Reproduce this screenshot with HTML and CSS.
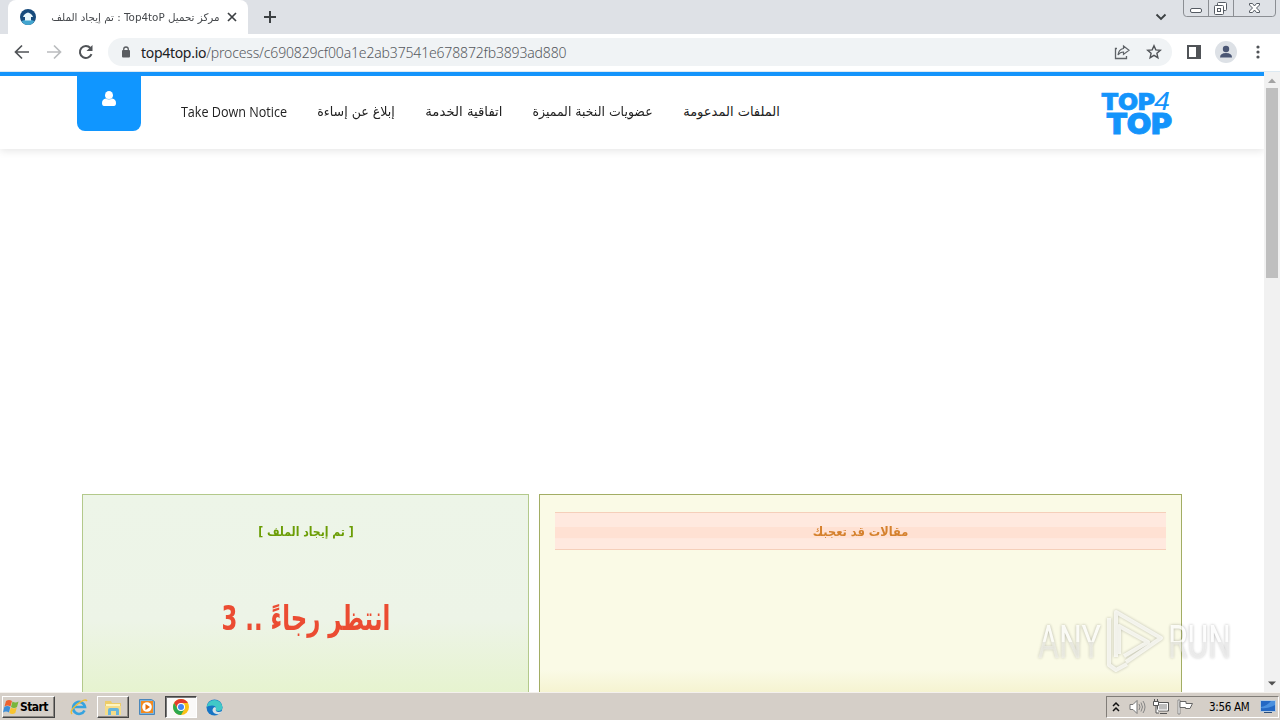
FILE: index.html
```html
<!DOCTYPE html>
<html lang="ar">
<head>
<meta charset="utf-8">
<title>Top4toP</title>
<link rel="stylesheet" href="styles.css">
</head>
<body>
<div class="tabstrip">
  <div class="tab">
    <svg class="favicon" width="16" height="16" viewBox="0 0 16 16"><circle cx="8" cy="8" r="8" fill="#174a7c"/><path d="M1.500 12q6.500-3 13 0A8 8 0 0 1 8 16a8 8 0 0 1-6.500-4" fill="#42a5cf"/><path d="M8 3.500q4 1 5 4.500h-2v3.500H5V8H3q1-3.500 5-4.500z" fill="#e9f7fc"/></svg>
    <span class="tab-title" dir="rtl"><span class="fit">مركز تحميل Top4toP : تم إيجاد الملف</span></span>
    <svg class="tab-close" width="10" height="10" viewBox="0 0 10 10"><path d="m1 1 8 8M9 1 1 9" stroke="#3c4043" stroke-width="1.700"/></svg>
  </div>
  <svg class="newtab" width="12" height="12" viewBox="0 0 12 12"><path d="M6 0v12M0 6h12" stroke="#3c4043" stroke-width="2"/></svg>
  <svg class="chevron" width="12" height="8" viewBox="0 0 12 8"><path d="m1.500 1.500 4.500 4.500 4.500-4.500" fill="none" stroke="#3c4043" stroke-width="1.900"/></svg>
  <svg class="winctl" width="93" height="17" viewBox="0 0 93 17"><path d="M.5 0v13q0 3.500 3 3.500h86q3 0 3-3.500V0M25.500 0v16M50.500 0v16" fill="none" stroke="#8b8e93"/><rect x="7.500" y="8.500" width="11" height="4" rx="1.500" fill="#fff" stroke="#555b63"/><rect x="34.500" y="2.500" width="9" height="8" rx="1" fill="#fff" stroke="#555b63"/><rect x="31.500" y="5.500" width="9" height="9" rx="1" fill="#fff" stroke="#555b63"/><rect x="34.500" y="8.500" width="3" height="3" fill="none" stroke="#555b63"/><path d="M66.500 3.500h3l2 2.500 2-2.500h3v1.500L73.500 8l3 3v1.500h-3l-2-2.500-2 2.500h-3V11l3-3-3-3z" fill="#fff" stroke="#555b63"/></svg>
</div>
<div class="toolbar">
  <svg class="nav-icon" width="16" height="16" viewBox="0 0 16 16"><path d="M15 8H2M8 1.500 1.500 8 8 14.500" fill="none" stroke="#505357" stroke-width="1.700"/></svg>
  <svg class="nav-icon" width="16" height="16" viewBox="0 0 16 16"><path d="M1 8h13M8 1.500 14.500 8 8 14.500" fill="none" stroke="#babcbe" stroke-width="1.700"/></svg>
  <svg class="nav-icon" width="16" height="16" viewBox="0 0 16 16"><path d="M13.500 10.200A6 6 0 1 1 12.400 4" fill="none" stroke="#505357" stroke-width="2"/><path d="M14.500 1v6h-6z" fill="#505357"/></svg>
  <div class="omnibox">
    <svg class="lock" width="8" height="12" viewBox="0 0 8 12"><rect y="4" width="8" height="7.500" rx="1" fill="#5a5d61"/><path d="M1.700 5V3.300a2.300 2.300 0 0 1 4.600 0V5" fill="none" stroke="#5a5d61" stroke-width="1.300"/></svg>
    <span class="url"><b>top4top.io</b>/process/c690829cf00a1e2ab37541e678872fb3893ad880</span>
    <svg class="share" width="16" height="16" viewBox="0 0 16 16"><path d="M3 4.500H1.500v10h11V12" fill="none" stroke="#5f6368" stroke-width="1.300"/><path d="M9.500 2 15 6.200l-5.500 4.200V8Q6 8 4 11q.5-5.500 5.500-6.500z" fill="none" stroke="#5f6368" stroke-width="1.200"/></svg>
    <svg width="16" height="16" viewBox="0 0 16 16"><path d="m8 1.800 1.800 4.100 4.500.4-3.400 3 1 4.400L8 11.400l-3.900 2.300 1-4.400-3.400-3 4.500-.4z" fill="none" stroke="#505357" stroke-width="1.400"/></svg>
  </div>
  <svg class="panel" width="14" height="14" viewBox="0 0 14 14"><path d="M1 1h12v12H1z" fill="#fff" stroke="#505357" stroke-width="2"/><path d="M9 1h4v12H9z" fill="#505357"/></svg>
  <svg class="avatar" width="22" height="22" viewBox="0 0 22 22"><circle cx="11" cy="11" r="11" fill="#dde1e6"/><circle cx="11" cy="8" r="3.200" fill="#4a5674"/><path d="M5 16.500q0-4.500 6-4.500t6 4.500z" fill="#4a5674"/></svg>
  <svg class="more" width="4" height="14" viewBox="0 0 4 14"><g fill="#505357"><circle cx="2" cy="2" r="1.600"/><circle cx="2" cy="7" r="1.600"/><circle cx="2" cy="12" r="1.600"/></g></svg>
</div>
<div class="viewport">
  <div class="page">
    <header class="header">
      <div class="user"><svg width="16" height="16" viewBox="0 0 16 16"><path d="M1 12q0-4 4-4.500 3 1.500 6 0 4 .5 4 4.500 0 3-2 3H3q-2 0-2-3" fill="#fff"/><ellipse cx="8" cy="4.300" rx="4" ry="4.300" fill="#fff"/><path d="M4.500 7.300 8 8.500l3.500-1.200" fill="none" stroke="#8ac7fb" stroke-width=".7"/></svg></div>
      <nav class="menu">
        <a class="m1"><span class="fit">Take Down Notice</span></a>
        <a class="m2" dir="rtl"><span class="fit">إبلاغ عن إساءة</span></a>
        <a class="m3" dir="rtl"><span class="fit">اتفاقية الخدمة</span></a>
        <a class="m4" dir="rtl"><span class="fit">عضويات النخبة المميزة</span></a>
        <a class="m5" dir="rtl"><span class="fit">الملفات المدعومة</span></a>
      </nav>
      <svg class="logo" width="72" height="46" viewBox="0 0 72 46"><g fill="#1494fb" stroke="#1494fb" font-family="Inter, sans-serif" font-weight="900"><text x="1" y="19" font-size="23.500" textLength="54" lengthAdjust="spacingAndGlyphs" stroke-width=".6">TOP</text><text x="6" y="42.500" font-size="29" textLength="66" lengthAdjust="spacingAndGlyphs" stroke-width=".9">TOP</text></g><text x="54" y="18.500" font-size="25" font-style="italic" fill="#1494fb" font-family="Liberation Sans, sans-serif" textLength="16" lengthAdjust="spacingAndGlyphs">4</text></svg>
    </header>
    <main class="content">
      <section class="file-box">
        <h2 dir="rtl"><span class="fit">[ تم إيجاد الملف ]</span></h2>
        <p dir="rtl"><span class="fit">انتظر رجاءً .. 3</span></p>
      </section>
      <section class="articles">
        <h2 dir="rtl"><span class="fit">مقالات قد تعجبك</span></h2>
      </section>
    </main>
  </div>
  <div class="scrollbar">
    <svg width="16" height="16" viewBox="0 0 16 16"><path d="m4 11 4-4.500 4 4.500z" fill="#a3a3a3"/></svg>
    <div class="thumb"></div>
    <svg width="16" height="16" viewBox="0 0 16 16"><path d="m4 5.500 4 4 4-4z" fill="#505050"/></svg>
  </div>
</div>
<div class="taskbar">
  <div class="start"><svg width="17" height="16" viewBox="0 0 17 16"><path d="M3 2q3-2 6 0L7.500 7.500q-3-2-6 0z" fill="#ee6330"/><path d="M9.500 2.500q3 2 6 0L14 8q-3 2-6 0z" fill="#79b63c"/><path d="M1.300 8q3-2 6 0L6 13.500q-3-2-6 0z" fill="#3e8fd8"/><path d="M7.800 8.500q3 2 6 0L12.300 14q-3 2-6 0z" fill="#f8c430"/></svg><span>Start</span></div>
  <svg class="ie" width="18" height="18" viewBox="0 0 18 18"><path d="M14.500 12.500A6 6 0 1 1 15 9H4.500" fill="none" stroke="#36a3df" stroke-width="2.600"/><path d="M2 16Q-1 13 7 6.500T17 3" fill="none" stroke="#f0bd35" stroke-width="1.400"/></svg>
  <div class="task"><svg width="18" height="17" viewBox="0 0 18 17"><path d="M1 2h6l1 2h9v12H1z" fill="#edcc68"/><path d="M2 5h14v4H2z" fill="#fff4be"/><path d="M1 7h16v9H1z" fill="#f5dc87"/><path d="M4 16v-5q0-2 2-2h7q2 0 2 2v5h-3v-4H7v4z" fill="#67b5dc"/></svg></div>
  <svg class="wmp" width="16" height="16" viewBox="0 0 16 16"><path d="M.5.500h12l3 2v13H.5z" fill="#7db4de" stroke="#4a87bb"/><rect x="2" y="2" width="12" height="12" fill="#f28a20"/><circle cx="8" cy="8" r="4.800" fill="#fff"/><path d="m6.500 5 4.500 3-4.500 3z" fill="#e56d0a"/></svg>
  <div class="task active"><svg width="16" height="16" viewBox="0 0 16 16"><circle cx="8" cy="8" r="8" fill="#fbc116"/><path d="M1.100 4A8 8 0 0 1 14.900 4H8L5 10z" fill="#e33b2e"/><path d="M1.100 4A8 8 0 0 0 8 16l3.500-6H4.600z" fill="#2da94f"/><circle cx="8" cy="8" r="4" fill="#fff"/><circle cx="8" cy="8" r="3" fill="#4285f4"/></svg></div>
  <svg class="edge" width="17" height="17" viewBox="0 0 17 17"><circle cx="8.500" cy="8.500" r="8" fill="#1674c4"/><path d="M.6 8A8 8 0 0 1 16.500 8q0 4-4.500 4-3 0-2-2.500 0-3-4-3T.6 8" fill="#41c8c7"/><path d="M10 9.500q-1 3 2 3.500 2 .3 4-1-1 2.500-3.500 3.500Q7 15 6.500 11.500 6.500 8.500 9 8q1 .5 1 1.500" fill="#d6e1e5"/></svg>
  <div class="tray">
    <svg width="8" height="12" viewBox="0 0 8 12"><path d="m1 5 3-3 3 3M1 10l3-3 3 3" fill="none" stroke="#111" stroke-width="1.500"/></svg>
    <svg class="t2" width="17" height="16" viewBox="0 0 17 16"><path d="M1 5.500h3l4-4v13l-4-4H1z" fill="#fff" stroke="#777"/><path d="M10 5q2 3 0 6M12 3.500q3 4.500 0 9M14 2q4 6 0 12" fill="none" stroke="#858585"/></svg>
    <svg class="t3" width="16" height="16" viewBox="0 0 16 16"><path d="M4.500 3.500h11v8.500h-11z" fill="#bcbcbc" stroke="#555"/><path d="M5.500 4.500h9v6.500h-9z" fill="none" stroke="#fff"/><path d="M7 14.500h7" stroke="#555"/><path d="M.5 2.500h5v4h-5zM1.500 0v2M4.500 0v2M3 7v7h3" fill="#fff" stroke="#555"/></svg>
    <svg class="t4" width="17" height="16" viewBox="0 0 17 16"><path d="M1 1h2v14H1z" fill="#fff" stroke="#777" stroke-width=".8"/><path d="M3 2.500h6v2h6.500L13 9.500H8.500v-1H3z" fill="#fff" stroke="#666"/></svg>
    <span class="clock">3:56 AM</span>
    <svg class="t5" width="16" height="14" viewBox="0 0 16 14"><rect x=".5" y=".5" width="15" height="11" fill="#2368c4" stroke="#b6cbe0"/><path d="M1 7Q7 6 11 1h4v4Q8 9 1 8z" fill="#4990df"/><path d="M4 12h8v1H4z" fill="#294d7b"/></svg>
  </div>
</div>
<svg class="watermark" width="206" height="70" viewBox="0 0 206 70"><defs><linearGradient id="wm" x1="0" y1="0" x2="0" y2="1"><stop offset=".49" stop-color="#fff" stop-opacity=".95"/><stop offset=".51" stop-color="#eee" stop-opacity=".65"/></linearGradient></defs><g font-family="Roboto, sans-serif" font-size="46" fill="url(#wm)"><text x="6" y="52" textLength="63" lengthAdjust="spacingAndGlyphs">ANY</text><text x="136" y="52" textLength="63" lengthAdjust="spacingAndGlyphs">RUN</text></g><path d="M84 51V6l45 26-35 24M87 48V20l29 16-24 14M77 12v47l7 5 11-6" fill="none" stroke="#fff" stroke-opacity=".8" stroke-width="4" stroke-linejoin="round"/></svg>
</body>
</html>
```
FILE: styles.css
```css
* { box-sizing: border-box; }
body { margin: 0; width: 1280px; height: 720px; overflow: hidden; display: flex; flex-direction: column; background: #fff; font-family: "DejaVu Sans", sans-serif; }
svg { display: block; flex: none; }
.fit { display: inline-block; white-space: nowrap; flex: none; }

.tabstrip { height: 34px; flex: none; background: #dee1e6; display: flex; align-items: flex-start; }
.tab { width: 240px; height: 34px; margin-left: 8px; background: #fff; border-radius: 8px 8px 0 0; display: flex; align-items: center; padding: 0 11px 0 12px; }
.tab-title { width: 169px; margin-left: 15px; display: flex; justify-content: center; font-size: 10.500px; color: #45484c; }
.tab-title .fit { transform: scaleX(.985); }
.tab-close { margin-left: 7px; }
.newtab { margin: 11px 0 0 16px; }
.chevron { margin: 13px 0 0 879px; }
.winctl { margin-left: 16px; }

.toolbar { height: 38px; flex: none; background: #fff; display: flex; align-items: center; padding: 0 0 1px 14px; border-bottom: 1px solid #dce9f2; }
.nav-icon { margin-right: 16px; }
.nav-icon:nth-child(3) { margin-right: 14px; }
.omnibox { width: 1064px; height: 28px; border-radius: 14px; background: #f0f3f5; display: flex; align-items: center; padding: 0 10px 0 14px; }
.url { flex: 1; margin-left: 11px; font-size: 14px; letter-spacing: -.16px; font-family: "Noto Sans", sans-serif; font-weight: 300; color: #56595e; white-space: nowrap; }
.url b { font-weight: 400; color: #202124; letter-spacing: -.3px; }
.share { margin-right: 16px; }
.panel { margin-left: 15px; }
.avatar { margin-left: 14px; }
.more { margin-left: 19px; }

.viewport { height: 620px; flex: none; display: flex; }
.page { width: 1264px; background: #fff; overflow: hidden; }
.header { height: 77px; border-top: 4px solid #1494fb; box-shadow: 0 2px 8px rgba(0,0,0,.1); display: flex; padding-left: 77px; }
.user { width: 64px; height: 55px; background: #1096ff; border-radius: 0 0 8px 8px; display: flex; justify-content: center; padding-top: 15px; }
.menu { display: flex; gap: 30px; margin-left: 40px; height: 70px; align-items: center; font-size: 13px; color: #222; }
.menu a { display: flex; justify-content: center; }
.m1 { width: 106px; font-family: "Open Sans", sans-serif; }
.m1 .fit { font-size: 14px; transform: scaleX(.9); }
.m2 { width: 78px; }
.m2 .fit { transform: scaleX(.97); }
.m3 { width: 78px; }
.m3 .fit { transform: scaleX(1.02); }
.m4 { width: 120px; }
.m4 .fit { transform: scaleX(.96); }
.m5 { width: 97px; }
.logo { margin: 15px 0 0 320px; overflow: visible; }

.content { display: flex; gap: 10px; padding: 345px 0 0 82px; }
.file-box { width: 447px; height: 260px; border: 1px solid #b3c98b; background: linear-gradient(#edf5e8 0, #edf4e7 125px, #e6f3cf 198px); text-align: center; }
.file-box h2 { margin: 25px 0 0; height: 24px; line-height: 24px; font-size: 12.500px; color: #6b9d05; }
.file-box h2 .fit { transform: scaleX(.87); }
.file-box p { margin: 44px 0 0; height: 60px; line-height: 60px; font-size: 34px; color: #eb4c32; font-weight: bold; }
.file-box p .fit { transform: scaleX(.67); }
.articles { width: 643px; height: 260px; border: 1px solid #a2ad64; background: linear-gradient(#fafae6 175px, #f5f3d0 198px); padding: 17px 15px; }
.articles h2 { margin: 0; height: 38px; line-height: 37px; border: 1px solid #f5cfba; border-width: 1px 0; background: linear-gradient(#ffe9df 0 38%, #ffe1d3 39% 70%, #ffe9df 71%); text-align: center; font-size: 12.500px; color: #d5812d; }
.articles h2 .fit { transform: scaleX(.91); }

.scrollbar { width: 16px; background: #f1f1f1; display: flex; flex-direction: column; }
.thumb { width: 12px; height: 190px; margin: 0 2px auto; background: #bfbfbf; }

.taskbar { height: 28px; flex: none; background: #d5cfc8; border-top: 1px solid #f4f1ed; display: flex; align-items: center; padding: 1px 0 0 2px; font-family: "DejaVu Sans Condensed", "DejaVu Sans", sans-serif; }
.start { width: 53px; height: 22px; border: 1px solid; border-color: #fff #444 #444 #fff; box-shadow: inset -1px -1px #8b8782; display: flex; align-items: center; font-size: 12px; font-weight: bold; letter-spacing: -.6px; color: #000; }
.ie { margin-left: 15px; }
.task { width: 32px; height: 22px; border: 1px solid; border-color: #fff #444 #444 #fff; box-shadow: inset -1px -1px #8b8782; margin-left: 9px; display: flex; align-items: center; justify-content: center; }
.wmp { margin-left: 10px; }
.task.active { margin-left: 10px; border-color: #444 #fff #fff #444; box-shadow: inset 1px 1px #777; background: #faf9f8; }
.edge { margin-left: 9px; }
.tray { margin-left: auto; width: 173px; height: 22px; margin-right: 1px; border: 1px solid; border-color: #817d78 #fff #fff #817d78; display: flex; align-items: center; padding-left: 5px; font-size: 11.500px; color: #000; }
.t2 { margin-left: 9px; }
.t3 { margin-left: 7px; }
.t4 { margin-left: 8px; }
.clock { width: 42px; margin-left: 15px; white-space: nowrap; letter-spacing: -.3px; }
.t5 { margin-left: 9px; }

.watermark { position: absolute; left: 1032px; top: 606px; overflow: visible; filter: drop-shadow(0 0 1.500px rgba(0,0,0,.4)); opacity: .75; }
```
